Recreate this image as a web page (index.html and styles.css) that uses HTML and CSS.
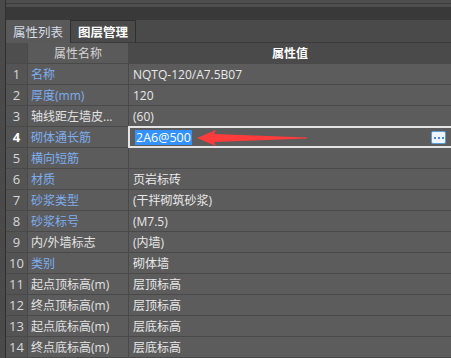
FILE: index.html
```html
<!DOCTYPE html>
<html lang="zh">
<head>
<meta charset="utf-8">
<link rel="stylesheet" href="styles.css">
</head>
<body>
<div class="app">
  <div class="side"></div>
  <div class="main">
    <div class="topbar"><div class="tline"></div></div>
    <div class="band"></div>
    <div class="tabs">
      <div class="tab active">属性列表</div>
      <div class="tab">图层管理</div>
      <div class="tabrest"></div>
    </div>
    <div class="grid">
      <div class="row head">
        <div class="c num"></div>
        <div class="c name">属性名称</div>
        <div class="c val">属性值</div>
      </div>
      <div class="row"><div class="c num">1</div><div class="c name blue">名称</div><div class="c val">NQTQ-120/A7.5B07</div></div>
      <div class="row"><div class="c num">2</div><div class="c name blue">厚度(mm)</div><div class="c val">120</div></div>
      <div class="row"><div class="c num">3</div><div class="c name">轴线距左墙皮...</div><div class="c val">(60)</div></div>
      <div class="row sel"><div class="c num">4</div><div class="c name blue">砌体通长筋</div><div class="c val">
        <div class="editor"><span class="hl">2A6@500</span><span class="more"><i></i><i></i><i></i></span></div>
        <svg class="arrow" width="116" height="22" viewBox="0 0 116 22"><polygon points="2,11 21,3 19,7 112,10.5 112,11.5 19,15 21,19" fill="#ff3b3b"/></svg>
      </div></div>
      <div class="row"><div class="c num">5</div><div class="c name blue">横向短筋</div><div class="c val"></div></div>
      <div class="row"><div class="c num">6</div><div class="c name blue">材质</div><div class="c val">页岩标砖</div></div>
      <div class="row"><div class="c num">7</div><div class="c name blue">砂浆类型</div><div class="c val">(干拌砌筑砂浆)</div></div>
      <div class="row"><div class="c num">8</div><div class="c name blue">砂浆标号</div><div class="c val">(M7.5)</div></div>
      <div class="row"><div class="c num">9</div><div class="c name">内/外墙标志</div><div class="c val">(内墙)</div></div>
      <div class="row"><div class="c num">10</div><div class="c name blue">类别</div><div class="c val">砌体墙</div></div>
      <div class="row"><div class="c num">11</div><div class="c name">起点顶标高(m)</div><div class="c val">层顶标高</div></div>
      <div class="row"><div class="c num">12</div><div class="c name">终点顶标高(m)</div><div class="c val">层顶标高</div></div>
      <div class="row"><div class="c num">13</div><div class="c name">起点底标高(m)</div><div class="c val">层底标高</div></div>
      <div class="row"><div class="c num">14</div><div class="c name">终点底标高(m)</div><div class="c val">层底标高</div></div>
    </div>
  </div>
</div>
</body>
</html>
```
FILE: styles.css
```css
* { box-sizing: border-box; margin: 0; padding: 0; }
html, body { width: 451px; height: 358px; overflow: hidden; background: #4b4b4b; }
body {
  font-family: "Open Sans", "Noto Sans CJK SC", sans-serif;
  font-size: 12px;
  color: #e6e6e6;
}
.app { display: flex; height: 358px; }
.side { width: 6px; background: #4a4a4a; border-right: 1px solid #2f2f2f; flex: none; }
.main { flex: 1; display: flex; flex-direction: column; min-width: 0; }
.topbar { height: 7px; background: #4e4e4e; padding-top: 3px; }
.tline { height: 1px; background: #3b3b3b; }
.band { height: 13px; background: #393939; }
.tabs { height: 23px; display: flex; background: #4a4a4a; }
.tab {
  height: 23px; display: flex; align-items: center; justify-content: center;
  border-bottom: 1px solid #3a3a3a;
}
.tab.active { width: 64px; background: #595959; color: #d6dde6; border-bottom-color: #595959; font-size: 12.5px; }
.tab:nth-child(2) {
  width: 66px; border: 1px solid #2f2f2f; border-bottom-color: #3a3a3a;
  color: #ffffff; font-weight: bold; font-size: 12.5px;
}
.tabrest { flex: 1; border-bottom: 1px solid #3a3a3a; }
.grid { display: flex; flex-direction: column; }
.row { display: flex; height: 21px; border-bottom: 1px solid #494949; background: #5c5c5c; }
.c { display: flex; align-items: center; height: 20px; white-space: nowrap; }
.num { width: 22px; justify-content: center; border-right: 1px solid #494949; background: #545454; color: #d8d8d8; font-size: 13px; flex: none; }
.name { width: 101px; padding-left: 3px; border-right: 1px solid #494949; flex: none; color: #e2e2e2; }
.name.blue { color: #7eaef0; }
.val { flex: 1; padding-left: 4px; color: #e8e8e8; position: relative; }
.head .num { background: #4e4e4e; }
.head .name { justify-content: center; padding-left: 0; background: #5a5a5a; color: #d4d4d4; }
.head .val { justify-content: center; padding-left: 0; background: #4a4a4a; color: #ffffff; font-weight: bold; }
.head { background: #4a4a4a; }
.sel .num { color: #ffffff; font-weight: bold; }
.editor {
  position: absolute; left: -1px; top: -1px; right: -4px; height: 22px;
  border: 2px solid #e4e4e4; background: #5c5c5c;
  display: flex; align-items: center; padding-left: 5px;
}
.hl { background: #3392ff; color: #ffffff; font-size: 12.5px; line-height: 15px; padding: 0 1px; }
.more {
  position: absolute; right: 7px; top: 3px; width: 15px; height: 13px;
  background: #eef4fb; border: 1px solid #5b9bd8; border-radius: 2px;
  display: flex; align-items: center; justify-content: center; gap: 2px;
}
.more i { width: 2px; height: 2px; background: #4a8ad4; display: block; }
.arrow { position: absolute; left: 66px; top: 0; }
```
